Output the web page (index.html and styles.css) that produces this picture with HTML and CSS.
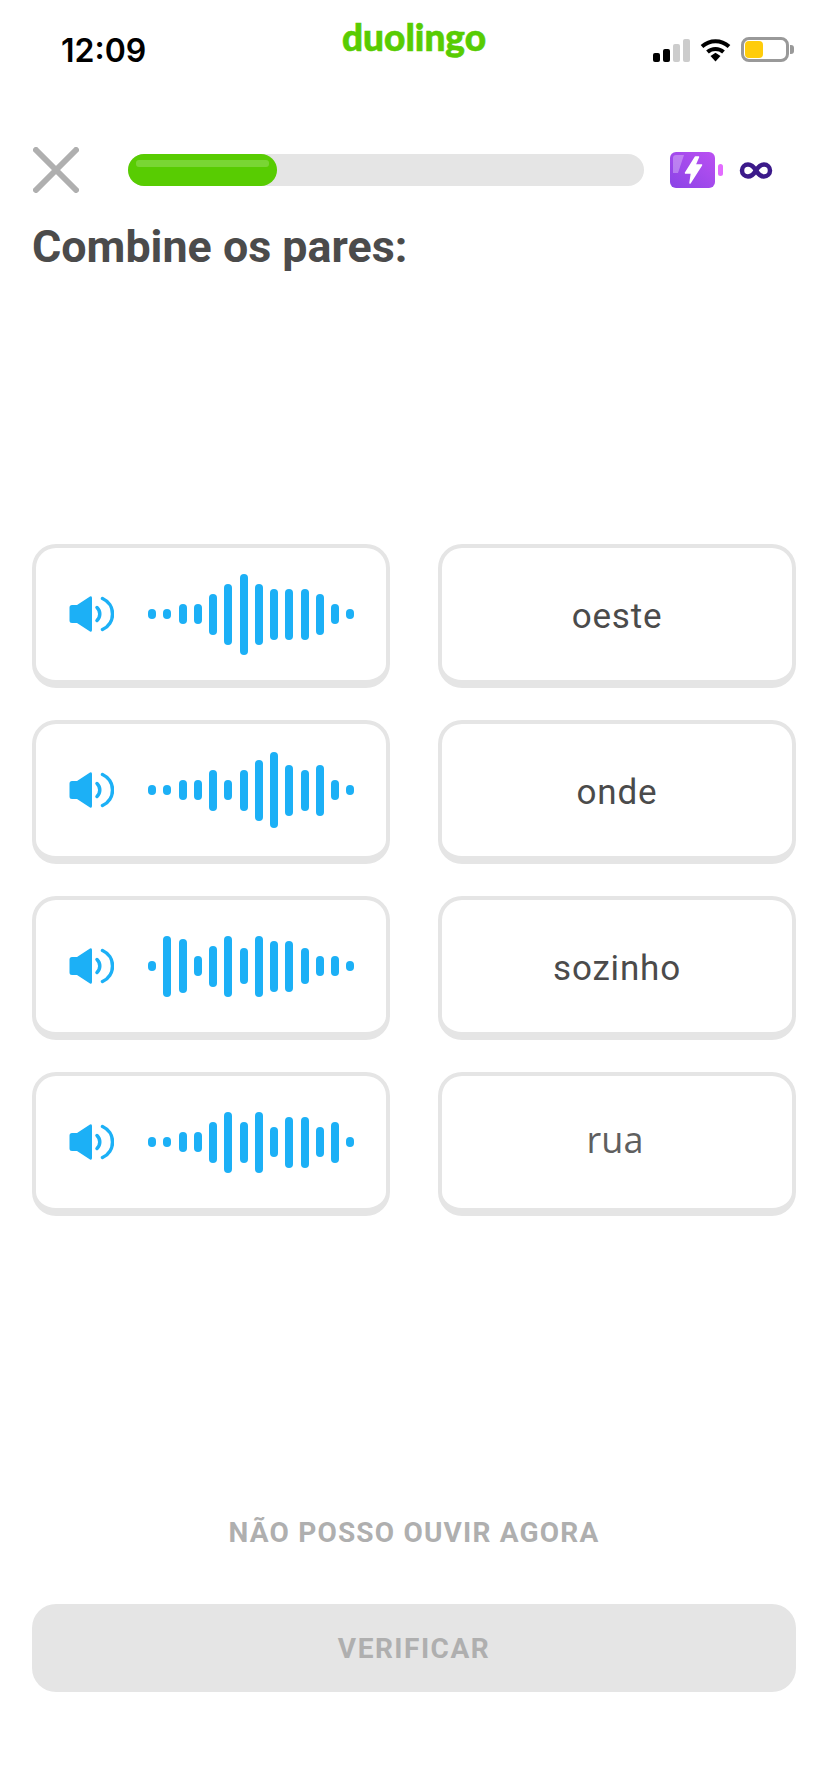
FILE: index.html
```html
<!DOCTYPE html>
<html lang="pt">
<head>
  <meta charset="UTF-8" />
  <meta name="viewport" content="width=device-width, initial-scale=1.0" />
  <title>Combine os pares</title>
  <link rel="stylesheet" href="styles.css">
</head>
<body>
  <div class="status-bar">
    <span class="time">12:09</span>
    <span class="brand">duolingo</span>
    <div class="status-icons">
      <div class="signal">
        <i class="on s1"></i><i class="on s2"></i><i class="s3"></i><i class="s4"></i>
      </div>
      <svg class="wifi" width="31" height="24" viewBox="0 0 31 24">
        <path d="M2 8.500C10 1.500 21 1.500 29 8.500" fill="none" stroke="#000" stroke-width="4" />
        <path d="M7.500 14C12 10 19 10 23.500 14" fill="none" stroke="#000" stroke-width="4" />
        <path d="M10.500 18L15.500 14.800L20.500 18L15.500 23.500Z" fill="#000" />
      </svg>
      <div class="battery"><div class="battery-level"></div></div>
      <div class="battery-nub"></div>
    </div>
  </div>

  <div class="lesson-header">
    <svg class="close" width="46" height="46" viewBox="0 0 46 46">
      <path d="M3 3L43 43M43 3L3 43" stroke="#afafaf" stroke-width="6" stroke-linecap="round" />
    </svg>
    <div class="progress"><div class="progress-fill"><div class="progress-shine"></div></div></div>
    <svg class="energy" width="53" height="36" viewBox="0 0 53 36">
      <defs>
        <linearGradient id="energyFill" x1="0" y1="1" x2="1" y2="0">
          <stop offset="0" stop-color="#8a44e6" />
          <stop offset="1" stop-color="#bb50f2" />
        </linearGradient>
      </defs>
      <rect x="0" y="0" width="45" height="36" rx="6" fill="url(#energyFill)" />
      <path d="M6 3H14L8 21H3V6Q3 3 6 3Z" fill="#fff" opacity="0.3" />
      <path d="M25.500 5L15.500 21H21.500L20 31L31.500 13H25L28.500 5Z" fill="#fff" stroke="#fff" stroke-width="1.500" stroke-linejoin="round" />
      <rect x="48" y="12" width="5" height="12" rx="2.500" fill="#e36cff" />
    </svg>
    <svg class="infinity" width="34" height="17" viewBox="0 0 34 17">
      <path d="M17 8.500C14 3.500 11.500 2.500 9 2.500A6 6 0 0 0 9 14.500C11.500 14.500 14 13.500 17 8.500C20 3.500 22.500 2.500 25 2.500A6 6 0 0 1 25 14.500C22.500 14.500 20 13.500 17 8.500Z" fill="none" stroke="#3c1a8a" stroke-width="4.500" />
    </svg>
  </div>

  <h1 class="title">Combine os pares:</h1>

  <div class="pairs">
    <div class="card audio">
      <svg class="speaker" width="45" height="36" viewBox="0 0 45 36">
        <path d="M3 9H8L21 0.600Q23 -0.300 23 2V34Q23 36.300 21 35.400L8 27H3Q0.500 27 0.500 24.500V11.500Q0.500 9 3 9Z" fill="#1cb0f6" />
        <path d="M28 11.500A9 9 0 0 1 28 24.500" fill="none" stroke="#1cb0f6" stroke-width="3.500" stroke-linecap="round" />
        <path d="M33.500 2.500A17 17 0 0 1 33.500 33.500" fill="none" stroke="#1cb0f6" stroke-width="3.500" stroke-linecap="round" />
      </svg>
      <div class="wave">
        <i style="height:10px"></i><i style="height:10px"></i><i style="height:20px"></i><i style="height:20px"></i><i style="height:41px"></i><i style="height:61px"></i><i style="height:81px"></i><i style="height:61px"></i><i style="height:51px"></i><i style="height:51px"></i><i style="height:51px"></i><i style="height:41px"></i><i style="height:20px"></i><i style="height:10px"></i>
      </div>
    </div>
    <div class="card word">oeste</div>

    <div class="card audio">
      <svg class="speaker" width="45" height="36" viewBox="0 0 45 36">
        <path d="M3 9H8L21 0.600Q23 -0.300 23 2V34Q23 36.300 21 35.400L8 27H3Q0.500 27 0.500 24.500V11.500Q0.500 9 3 9Z" fill="#1cb0f6" />
        <path d="M28 11.500A9 9 0 0 1 28 24.500" fill="none" stroke="#1cb0f6" stroke-width="3.500" stroke-linecap="round" />
        <path d="M33.500 2.500A17 17 0 0 1 33.500 33.500" fill="none" stroke="#1cb0f6" stroke-width="3.500" stroke-linecap="round" />
      </svg>
      <div class="wave">
        <i style="height:10px"></i><i style="height:10px"></i><i style="height:20px"></i><i style="height:20px"></i><i style="height:41px"></i><i style="height:20px"></i><i style="height:41px"></i><i style="height:61px"></i><i style="height:76px"></i><i style="height:51px"></i><i style="height:41px"></i><i style="height:51px"></i><i style="height:20px"></i><i style="height:10px"></i>
      </div>
    </div>
    <div class="card word">onde</div>

    <div class="card audio">
      <svg class="speaker" width="45" height="36" viewBox="0 0 45 36">
        <path d="M3 9H8L21 0.600Q23 -0.300 23 2V34Q23 36.300 21 35.400L8 27H3Q0.500 27 0.500 24.500V11.500Q0.500 9 3 9Z" fill="#1cb0f6" />
        <path d="M28 11.500A9 9 0 0 1 28 24.500" fill="none" stroke="#1cb0f6" stroke-width="3.500" stroke-linecap="round" />
        <path d="M33.500 2.500A17 17 0 0 1 33.500 33.500" fill="none" stroke="#1cb0f6" stroke-width="3.500" stroke-linecap="round" />
      </svg>
      <div class="wave">
        <i style="height:10px"></i><i style="height:61px"></i><i style="height:54px"></i><i style="height:20px"></i><i style="height:41px"></i><i style="height:61px"></i><i style="height:36px"></i><i style="height:61px"></i><i style="height:51px"></i><i style="height:51px"></i><i style="height:36px"></i><i style="height:20px"></i><i style="height:20px"></i><i style="height:10px"></i>
      </div>
    </div>
    <div class="card word">sozinho</div>

    <div class="card audio">
      <svg class="speaker" width="45" height="36" viewBox="0 0 45 36">
        <path d="M3 9H8L21 0.600Q23 -0.300 23 2V34Q23 36.300 21 35.400L8 27H3Q0.500 27 0.500 24.500V11.500Q0.500 9 3 9Z" fill="#1cb0f6" />
        <path d="M28 11.500A9 9 0 0 1 28 24.500" fill="none" stroke="#1cb0f6" stroke-width="3.500" stroke-linecap="round" />
        <path d="M33.500 2.500A17 17 0 0 1 33.500 33.500" fill="none" stroke="#1cb0f6" stroke-width="3.500" stroke-linecap="round" />
      </svg>
      <div class="wave">
        <i style="height:10px"></i><i style="height:10px"></i><i style="height:20px"></i><i style="height:20px"></i><i style="height:41px"></i><i style="height:61px"></i><i style="height:41px"></i><i style="height:61px"></i><i style="height:30px"></i><i style="height:51px"></i><i style="height:51px"></i><i style="height:30px"></i><i style="height:41px"></i><i style="height:10px"></i>
      </div>
    </div>
    <div class="card word word-alt">rua</div>
  </div>

  <div class="footer">
    <div class="skip">NÃO POSSO OUVIR AGORA</div>
    <div class="check">VERIFICAR</div>
  </div>
</body>
</html>
```

FILE: styles.css
```css
* {
  box-sizing: border-box;
}
body {
  margin: 0;
  width: 828px;
  height: 1792px;
  background: #fff;
  font-family: Roboto, "Noto Sans", sans-serif;
  display: flex;
  flex-direction: column;
  overflow: hidden;
}

/* status bar */
.status-bar {
  display: grid;
  grid-template-columns: 1fr auto 1fr;
  height: 147px;
  padding: 0 34px;
}
.time {
  font-family: Inter, sans-serif;
  font-weight: 600;
  font-size: 32px;
  line-height: 38px;
  margin: 32px 0 0 27px;
  color: #000;
}
.brand {
  font-family: Lato, sans-serif;
  font-weight: 900;
  font-size: 37px;
  line-height: 40px;
  margin-top: 17px;
  color: #58cc02;
  -webkit-text-stroke: 0.6px #58cc02;
}
.status-icons {
  display: flex;
  align-items: center;
  justify-content: flex-end;
  height: 25px;
  margin-top: 37px;
}
.signal {
  display: flex;
  align-items: flex-end;
  gap: 3px;
  height: 24px;
  margin-right: 10px;
}
.signal i {
  width: 7px;
  border-radius: 2px;
  background: #ccc;
}
.signal i.on {
  background: #000;
}
.s1 { height: 9px; }
.s2 { height: 13px; }
.s3 { height: 18px; }
.s4 { height: 23px; }
.wifi {
  margin-right: 10px;
}
.battery {
  width: 48px;
  height: 25px;
  border: 3px solid #999;
  border-radius: 8px;
  padding: 1px;
}
.battery-level {
  width: 18px;
  height: 100%;
  border-radius: 4px;
  background: #ffcc0a;
}
.battery-nub {
  width: 4px;
  height: 9px;
  margin-left: 1px;
  border-radius: 0 3px 3px 0;
  background: #999;
}

/* lesson header */
.lesson-header {
  display: flex;
  align-items: center;
  height: 46px;
  padding: 0 55px 0 33px;
}
.close {
  margin-right: 49px;
}
.progress {
  flex: 1;
  height: 32px;
  border-radius: 16px;
  background: #e5e5e5;
}
.progress-fill {
  width: 149px;
  height: 100%;
  border-radius: 16px;
  background: #58cc02;
  padding: 6px 8px 0;
}
.progress-shine {
  height: 7px;
  border-radius: 3px;
  background: rgba(255,255,255,0.2);
}
.energy {
  margin-left: 26px;
}
.infinity {
  margin-left: 16px;
}

.title {
  margin: 29px 32px 0;
  font-size: 44.800px;
  line-height: 50px;
  font-weight: 700;
  color: #4b4b4b;
}

/* pairs */
.pairs {
  display: grid;
  grid-template-columns: 358px 358px;
  grid-auto-rows: 144px;
  gap: 32px 48px;
  margin: 272px 32px 0;
}
.card {
  display: flex;
  align-items: center;
  border: 4px solid #e5e5e5;
  border-bottom-width: 8px;
  border-radius: 24px;
  background: #fff;
}
.audio {
  padding: 0 0 0 33px;
}
.speaker {
  margin-right: 34px;
}
.wave {
  display: flex;
  align-items: center;
  gap: 7.270px;
}
.wave i {
  width: 8px;
  border-radius: 4px;
  background: #1cb0f6;
}
.word {
  justify-content: center;
  padding-top: 4px;
  font-size: 35px;
  letter-spacing: 0.800px;
  color: #4b4b4b;
}
.word-alt {
  font-family: "Open Sans", sans-serif;
  font-size: 36px;
  letter-spacing: 0;
  color: #5f5f5f;
  padding: 0 4px 6px 0;
}

/* footer */
.footer {
  margin: auto 32px 100px;
  text-align: center;
  font-weight: 700;
  color: #afafaf;
}
.skip {
  font-size: 28px;
  line-height: 34px;
  letter-spacing: 1.200px;
  margin-bottom: 54px;
}
.check {
  height: 88px;
  line-height: 90px;
  border-radius: 24px;
  background: #e5e5e5;
  font-size: 28px;
  letter-spacing: 1.500px;
}
```
